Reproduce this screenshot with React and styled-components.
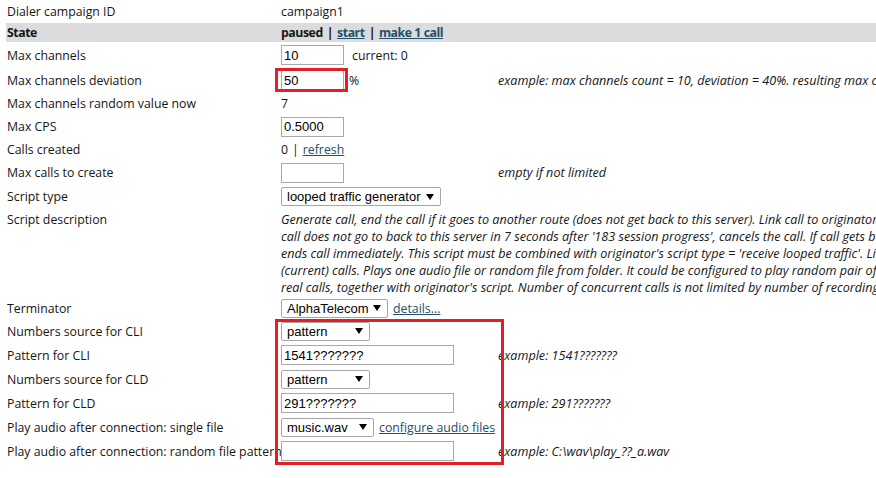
import React from 'react'
import styled, { createGlobalStyle } from 'styled-components'

const GlobalStyle = createGlobalStyle`
  html, body {
    margin: 0;
    padding: 0;
    background: #fff;
  }
  body {
    width: 876px;
    height: 478px;
    overflow: hidden;
    font-family: 'Open Sans', 'Noto Sans', sans-serif;
    font-size: 12.3px;
    color: #161616;
  }
`

const Page = styled.div`
  padding-left: 6px;
  width: 1200px;
`

const Row = styled.div`
  box-sizing: border-box;
  display: grid;
  grid-template-columns: 274px 217px 1fr;
  align-items: ${p => (p.$top ? 'start' : 'center')};
  padding-top: ${p => (p.$top ? 2 : 0)}px;
  height: ${p => p.$h}px;
  line-height: 17px;
  background: ${p => (p.$shade ? '#dcdcdc' : 'transparent')};
  font-weight: ${p => (p.$shade ? 700 : 400)};
  letter-spacing: ${p => (p.$shade ? '-0.45px' : 'normal')};
`

const Label = styled.div`
  padding-left: 1px;
  white-space: nowrap;
`

const Value = styled.div`
  display: flex;
  align-items: center;
  padding-left: 1px;
  white-space: nowrap;
`

const Hint = styled.div`
  padding-left: 1px;
  font-style: italic;
  font-size: 12.6px;
  white-space: nowrap;
`

const Description = styled.div`
  grid-column: 2 / span 2;
  padding-left: 1px;
  font-style: italic;
  font-size: 12.6px;
`

const Line = styled.div`
  white-space: nowrap;
`

const Link = styled.a`
  color: #22506e;
  text-decoration: underline;
  cursor: pointer;
  margin-left: ${p => p.$gap || 0}px;
`

const Sep = styled.span`
  margin: 0 4px;
`

const Input = styled.input`
  box-sizing: border-box;
  width: ${p => p.$w}px;
  height: 20px;
  margin: 0;
  padding: 0 2px;
  border: 1px solid #a9a9a9;
  font-family: 'Liberation Sans', Arial, sans-serif;
  font-size: 13px;
  color: #000;
  background: #fff;
  outline: none;
`

const Select = styled.div`
  box-sizing: border-box;
  display: inline-flex;
  align-items: center;
  justify-content: space-between;
  width: ${p => p.$w}px;
  height: 19px;
  padding: 0 6px 0 5px;
  border: 1px solid #a6a6a6;
  border-radius: 2px;
  font-family: 'Liberation Sans', Arial, sans-serif;
  font-size: 13px;
  color: #000;
  background: #fff;
`

const Note = styled.span`
  margin-left: ${p => p.$gap}px;
`

const Marked = styled.span`
  position: relative;
  display: inline-flex;
  &::after {
    content: '';
    position: absolute;
    left: -6px;
    top: -2px;
    right: -4px;
    bottom: -2px;
    border: 3px solid #e31e25;
    pointer-events: none;
  }
`

const Group = styled.div`
  position: relative;
  &::after {
    content: '';
    position: absolute;
    left: 269px;
    top: 0;
    width: 229px;
    bottom: -2px;
    box-sizing: border-box;
    border: 3px solid #e31e25;
    pointer-events: none;
  }
`

const Arrow = () => (
  <svg width="8" height="6" viewBox="0 0 8 6">
    <path d="M0 0 H8 L4 6 Z" fill="#000" />
  </svg>
)

const Dropdown = ({ w, children }) => (
  <Select $w={w}>
    <span>{children}</span>
    <Arrow />
  </Select>
)

const description = [
  'Generate call, end the call if it goes to another route (does not get back to this server). Link call to originator\'s call, if call gets back to this server.',
  'call does not go to back to this server in 7 seconds after \'183 session progress\', cancels the call. If call gets back to this server with wrong number,',
  'ends call immediately. This script must be combined with originator\'s script type = \'receive looped traffic\'. Limits number of simultaneous',
  '(current) calls. Plays one audio file or random file from folder. It could be configured to play random pair of files to simulate conversation of',
  'real calls, together with originator\'s script. Number of concurrent calls is not limited by number of recordings.',
]

export default function App() {
  return (
    <>
      <GlobalStyle />
      <Page>
        <Row $h={23}>
          <Label>Dialer campaign ID</Label>
          <Value>campaign1</Value>
        </Row>
        <Row $h={19} $shade>
          <Label>State</Label>
          <Value>
            paused<Sep>|</Sep><Link>start</Link><Sep>|</Sep><Link>make 1 call</Link>
          </Value>
        </Row>
        <Row $h={26}>
          <Label>Max channels</Label>
          <Value>
            <Input $w={63} defaultValue="10" />
            <Note $gap={8}>current: 0</Note>
          </Value>
        </Row>
        <Row $h={24}>
          <Label>Max channels deviation</Label>
          <Value>
            <Marked>
              <Input $w={63} defaultValue="50" />
            </Marked>
            <Note $gap={5}>%</Note>
          </Value>
          <Hint>example: max channels count = 10, deviation = 40%. resulting max channels value is random between 6 and 14</Hint>
        </Row>
        <Row $h={23}>
          <Label>Max channels random value now</Label>
          <Value>7</Value>
        </Row>
        <Row $h={23}>
          <Label>Max CPS</Label>
          <Value>
            <Input $w={63} defaultValue="0.5000" />
          </Value>
        </Row>
        <Row $h={23}>
          <Label>Calls created</Label>
          <Value>
            0<Sep>|</Sep><Link>refresh</Link>
          </Value>
        </Row>
        <Row $h={23}>
          <Label>Max calls to create</Label>
          <Value>
            <Input $w={63} defaultValue="" />
          </Value>
          <Hint>empty if not limited</Hint>
        </Row>
        <Row $h={25}>
          <Label>Script type</Label>
          <Value>
            <Dropdown w={160}>looped traffic generator</Dropdown>
          </Value>
        </Row>
        <Row $h={88} $top>
          <Label>Script description</Label>
          <Description>
            {description.map(text => (
              <Line key={text}>{text}</Line>
            ))}
          </Description>
        </Row>
        <Row $h={22}>
          <Label>Terminator</Label>
          <Value>
            <Dropdown w={107}>AlphaTelecom</Dropdown>
            <Link $gap={5}>details...</Link>
          </Value>
        </Row>
        <Group>
          <Row $h={24}>
            <Label>Numbers source for CLI</Label>
            <Value>
              <Dropdown w={89}>pattern</Dropdown>
            </Value>
          </Row>
          <Row $h={24}>
            <Label>Pattern for CLI</Label>
            <Value>
              <Input $w={173} defaultValue="1541???????" />
            </Value>
            <Hint>example: 1541???????</Hint>
          </Row>
          <Row $h={24}>
            <Label>Numbers source for CLD</Label>
            <Value>
              <Dropdown w={89}>pattern</Dropdown>
            </Value>
          </Row>
          <Row $h={24}>
            <Label>Pattern for CLD</Label>
            <Value>
              <Input $w={173} defaultValue="291???????" />
            </Value>
            <Hint>example: 291???????</Hint>
          </Row>
          <Row $h={24}>
            <Label>Play audio after connection: single file</Label>
            <Value>
              <Dropdown w={93}>music.wav</Dropdown>
              <Link $gap={5}>configure audio files</Link>
            </Value>
          </Row>
          <Row $h={24}>
            <Label>Play audio after connection: random file pattern</Label>
            <Value>
              <Input $w={173} defaultValue="" />
            </Value>
            <Hint>example: C:\wav\play_??_a.wav</Hint>
          </Row>
        </Group>
      </Page>
    </>
  )
}
